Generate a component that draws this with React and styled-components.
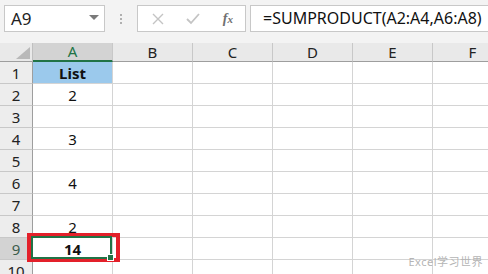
import styled, { createGlobalStyle } from 'styled-components';

const GlobalStyle = createGlobalStyle`
  html, body {
    margin: 0;
    padding: 0;
    background: #ffffff;
  }
  body {
    font-family: "Noto Sans", "Noto Sans CJK SC", sans-serif;
    color: #000;
  }
`;

const columns = ['A', 'B', 'C', 'D', 'E', 'F'];
const values = ['List', '2', '', '3', '', '4', '', '2', '14', ''];

function App() {
  return (
    <>
      <GlobalStyle />
      <Window>
        <FormulaBar>
          <NameBox>
            <span>A9</span>
            <Caret />
          </NameBox>
          <Grip>
            <i />
            <i />
            <i />
          </Grip>
          <ButtonBox>
            <svg width="12" height="12" viewBox="0 0 12 12">
              <path d="M1 1 L11 11 M11 1 L1 11" stroke="#c4c4c4" strokeWidth="1.4" />
            </svg>
            <svg width="14" height="12" viewBox="0 0 14 12">
              <path d="M1 6 L5 10 L13 1" stroke="#c4c4c4" strokeWidth="1.8" fill="none" />
            </svg>
            <Fx>
              f<sub>x</sub>
            </Fx>
          </ButtonBox>
          <FormulaInput>=SUMPRODUCT(A2:A4,A6:A8)</FormulaInput>
        </FormulaBar>

        <Sheet>
          <Corner>
            <svg width="14" height="12" viewBox="0 0 14 12">
              <path d="M14 0 L14 12 L0 12 Z" fill="#b9b9b9" />
            </svg>
          </Corner>
          {columns.map((c) => (
            <ColHead key={c} $active={c === 'A'}>
              {c}
            </ColHead>
          ))}
          {values.map((v, i) => {
            const row = i + 1;
            return [
              <RowHead key={`h${row}`} $active={row === 9}>
                {row}
              </RowHead>,
              ...columns.map((c) => {
                if (c !== 'A') return <Cell key={`${c}${row}`} />;
                const selected = row === 9;
                return (
                  <Cell
                    key={`${c}${row}`}
                    $header={row === 1}
                    $bold={row === 1 || selected}
                    $selected={selected}
                  >
                    {v}
                    {selected && (
                      <>
                        <Highlight />
                        <Selection>
                          <Handle />
                        </Selection>
                      </>
                    )}
                  </Cell>
                );
              }),
            ];
          })}
        </Sheet>
        <Watermark>Excel学习世界</Watermark>
      </Window>
    </>
  );
}

export default App;

const Window = styled.div`
  position: relative;
  width: 488px;
  height: 274px;
  overflow: hidden;
  background: #f3f3f3;
`;

const FormulaBar = styled.div`
  display: flex;
  align-items: center;
  height: 43px;
  padding: 0 0 6px 4px;
  box-sizing: border-box;
`;

const NameBox = styled.div`
  display: flex;
  align-items: center;
  justify-content: space-between;
  width: 101px;
  height: 27px;
  box-sizing: border-box;
  border: 1px solid #c8c8c8;
  background: #fff;
  padding: 0 5px 0 6px;
  font-size: 17px;
  color: #222;
`;

const Caret = styled.div`
  width: 0;
  height: 0;
  border-left: 5px solid transparent;
  border-right: 5px solid transparent;
  border-top: 5px solid #7a7a7a;
  margin-top: -2px;
`;

const Grip = styled.div`
  display: flex;
  flex-direction: column;
  gap: 2px;
  width: 32px;
  align-items: center;
  i {
    display: block;
    width: 2px;
    height: 2px;
    background: #b0b0b0;
  }
`;

const ButtonBox = styled.div`
  display: flex;
  align-items: center;
  justify-content: space-between;
  width: 109px;
  height: 27px;
  box-sizing: border-box;
  border: 1px solid #c8c8c8;
  background: #fff;
  padding: 0 12px 0 14px;
`;

const Fx = styled.span`
  font-family: "Liberation Serif", serif;
  font-style: italic;
  font-weight: bold;
  font-size: 14px;
  color: #707070;
  sub {
    font-size: 11px;
    vertical-align: baseline;
  }
`;

const FormulaInput = styled.div`
  flex: 1;
  margin-left: 4px;
  height: 27px;
  box-sizing: border-box;
  border: 1px solid #c8c8c8;
  border-right: none;
  background: #fff;
  padding-left: 12px;
  font-size: 16px;
  line-height: 25px;
  color: #111;
  white-space: nowrap;
`;

const Sheet = styled.div`
  display: grid;
  grid-template-columns: 33px repeat(6, 80px);
  grid-template-rows: 19px repeat(10, 22px);
  background: #fff;
`;

const Corner = styled.div`
  display: flex;
  align-items: flex-end;
  justify-content: flex-end;
  padding: 0 2px 2px 0;
  background: #e9e9e9;
  border-right: 1px solid #c0c0c0;
  border-bottom: 1px solid #9e9e9e;
`;

const ColHead = styled.div`
  display: flex;
  align-items: center;
  justify-content: center;
  font-size: 15px;
  line-height: 1;
  background: ${(p) => (p.$active ? '#d3d3d3' : '#e9e9e9')};
  color: ${(p) => (p.$active ? '#217346' : '#222')};
  border-right: 1px solid #c8c8c8;
  border-bottom: ${(p) => (p.$active ? '2px solid #217346' : '1px solid #9e9e9e')};
  box-sizing: border-box;
`;

const RowHead = styled.div`
  display: flex;
  align-items: center;
  justify-content: center;
  font-size: 15px;
  background: ${(p) => (p.$active ? '#d3d3d3' : '#ededed')};
  color: ${(p) => (p.$active ? '#3b5d4c' : '#222')};
  border-right: 1px solid #9e9e9e;
  border-bottom: 1px solid #c8c8c8;
  box-sizing: border-box;
`;

const Cell = styled.div`
  position: relative;
  z-index: ${(p) => (p.$selected ? 2 : 'auto')};
  display: flex;
  align-items: center;
  justify-content: center;
  font-size: 15px;
  font-weight: ${(p) => (p.$bold ? 700 : 400)};
  background: ${(p) => (p.$header ? '#9bc9ec' : '#fff')};
  border-right: 1px solid #d4d4d4;
  border-bottom: 1px solid #d4d4d4;
  box-sizing: border-box;
  color: #111;
`;

const Selection = styled.div`
  position: absolute;
  left: -2px;
  top: -2px;
  right: 0;
  bottom: 0;
  border: 2px solid #217346;
`;

const Handle = styled.div`
  position: absolute;
  right: -4px;
  bottom: -4px;
  width: 5px;
  height: 5px;
  background: #217346;
  border: 1px solid #fff;
`;

const Highlight = styled.div`
  position: absolute;
  left: -6px;
  top: -5px;
  right: -8px;
  bottom: -3px;
  border: 4px solid #e3202a;
`;

const Watermark = styled.div`
  position: absolute;
  right: 5px;
  bottom: 5px;
  z-index: 3;
  font-size: 11px;
  color: #b5b5b5;
  letter-spacing: 0.5px;
`;
